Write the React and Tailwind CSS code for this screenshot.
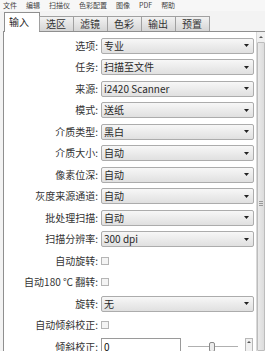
import React from 'react'

const font = { fontFamily: '"Noto Sans CJK SC", "Noto Sans", sans-serif' }

const menus = ['文件', '编辑', '扫描仪', '色彩配置', '图像', 'PDF', '帮助']
const tabs = ['输入', '选区', '滤镜', '色彩', '输出', '预置']

const rows = [
  { label: '选项', value: '专业' },
  { label: '任务', value: '扫描至文件' },
  { label: '来源', value: 'i2420 Scanner' },
  { label: '模式', value: '送纸' },
  { label: '介质类型', value: '黑白' },
  { label: '介质大小', value: '自动' },
  { label: '像素位深', value: '自动' },
  { label: '灰度来源通道', value: '自动' },
  { label: '批处理扫描', value: '自动' },
  { label: '扫描分辨率', value: '300 dpi' },
  { label: '自动旋转', check: true },
  { label: '自动180 ℃ 翻转', check: true },
  { label: '旋转', value: '无' },
  { label: '自动倾斜校正', check: true },
]

function Select({ value }) {
  return (
    <div className="w-[153px] h-[16px] flex items-center justify-between rounded-[2px] border border-[#acacac] bg-gradient-to-b from-[#f7f7f7] to-[#e0e0e0] pl-[2px] pr-[4px]">
      <span className="text-[10px] leading-none text-[#2a2a2a]">{value}</span>
      <svg width="5" height="3" viewBox="0 0 5 3"><path d="M0 0h5L2.5 3z" fill="#222" /></svg>
    </div>
  )
}

function Row({ label, children }) {
  return (
    <div className="h-[21.5px] shrink-0 flex items-center">
      <div className="w-[95px] text-right text-[10px] leading-none text-[#333] pr-[1px] whitespace-nowrap">{label}:</div>
      <div className="ml-[2px]">{children}</div>
    </div>
  )
}

export default function App() {
  return (
    <div className="w-[265px] h-[351px] overflow-hidden bg-[#f3f3f3] flex flex-col" style={font}>
      <div className="h-[11px] shrink-0 flex items-center gap-[9px] pl-[3px] text-[7px] leading-none text-[#444] bg-[#f7f7f7]">
        {menus.map(m => <span key={m}>{m}</span>)}
      </div>
      <div className="h-[20px] shrink-0 flex items-end pl-[4px] relative z-10">
        {tabs.map((t, i) => i === 0 ? (
          <div key={t} className="w-[36px] h-[20px] bg-white border border-b-0 border-[#8f8f8f] pl-[4px] pt-[4px] text-[10px] leading-none text-[#222] mb-[-1px]">{t}</div>
        ) : (
          <div key={t} className="w-[35px] h-[15px] ml-[-1px] border border-b-0 border-[#a0a0a0] bg-gradient-to-b from-[#f2f2f2] to-[#d5d5d5] pl-[6px] pt-[2px] text-[10px] leading-none text-[#333]">{t}</div>
        ))}
      </div>
      <div className="flex-1 min-h-0 overflow-hidden ml-[3px] bg-white border-l border-t border-[#8f8f8f] flex">
        <div className="flex-1 pt-[3px] flex flex-col">
          {rows.map(r => (
            <Row key={r.label} label={r.label}>
              {r.check ? (
                <div className="w-[8px] h-[8px] border border-[#b5b5b5] bg-[#f4f4f4]" />
              ) : (
                <Select value={r.value} />
              )}
            </Row>
          ))}
          <Row label="倾斜校正">
            <div className="flex items-center">
              <div className="w-[80px] h-[17px] border border-[#9a9a9a] bg-white pl-[2px] text-[10px] leading-[15px] text-[#111]">0</div>
              <div className="relative w-[50px] h-[12px] ml-[7px] flex items-center">
                <div className="w-full h-[1px] bg-[#b0b0b0]" />
                <div className="absolute left-[21px] top-[1px] w-[6px] h-[10px] rounded-[2px] border border-[#8a8a8a] bg-[#ececec]" />
              </div>
              <div className="ml-[7px] w-[8px] h-[17px] border border-[#b8b8b8] bg-[#f0f0f0] flex flex-col items-center pt-[2px]">
                <svg width="4" height="2" viewBox="0 0 4 2"><path d="M0 2h4L2 0z" fill="#555" /></svg>
              </div>
            </div>
          </Row>
        </div>
        <div className="w-[10px] ml-[2px] border-l border-[#d8d8d8] bg-[#f0f0f0] flex flex-col items-center">
          <div className="h-[10px] shrink-0 flex items-center">
            <svg width="4" height="2" viewBox="0 0 4 2"><path d="M0 2h4L2 0z" fill="#555" /></svg>
          </div>
          <div className="w-[8px] flex-1 border border-[#bcbcbc] rounded-[1px] bg-gradient-to-r from-[#eaeaea] to-[#dcdcdc] flex flex-col items-center pt-[158px]">
            <div className="w-[4px] h-[1px] bg-[#999] mb-[1px]" />
            <div className="w-[4px] h-[1px] bg-[#999] mb-[1px]" />
            <div className="w-[4px] h-[1px] bg-[#999]" />
          </div>
        </div>
      </div>
    </div>
  )
}
